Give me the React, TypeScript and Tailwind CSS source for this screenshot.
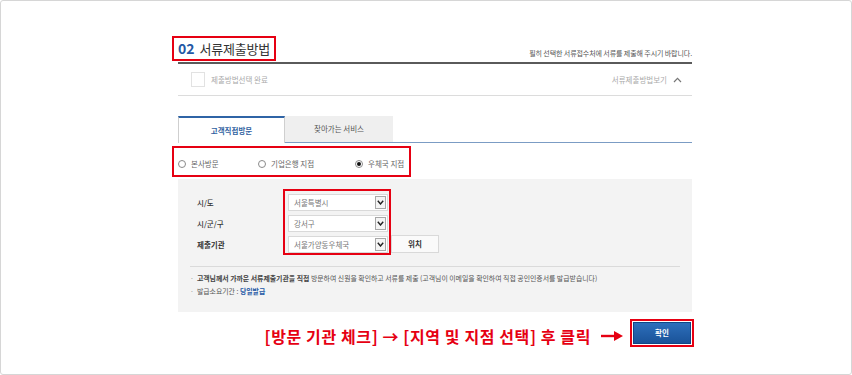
const RED = 'border-[#e60012]';

function Radio({ label, checked, className }: { label: string; checked?: boolean; className?: string }) {
	return (
		<label className={`flex items-center gap-[5px] ${className ?? ''}`}>
			<span className="flex h-[8px] w-[8px] items-center justify-center rounded-full border border-[#8a8a8a] bg-white">
				{checked && <span className="h-[4px] w-[4px] rounded-full bg-[#111]" />}
			</span>
			<span className="text-[7.5px] text-[#666]">{label}</span>
		</label>
	);
}

function Select({ value }: { value: string }) {
	return (
		<div className="flex h-[17px] w-[100px] items-stretch border border-[#d9d9d9] bg-white">
			<span className="flex flex-1 items-center pl-[5px] text-[7.5px] text-[#777]">{value}</span>
			<span className="m-[1px] flex w-[11px] items-center justify-center border border-[#a8a8a8] bg-[#f4f4f4]">
				<svg width="7" height="5" viewBox="0 0 7 5">
					<path d="M0.8 0.8 L3.5 4 L6.2 0.8" fill="none" stroke="#222" strokeWidth="1.4" />
				</svg>
			</span>
		</div>
	);
}

export default function App() {
	return (
		<div className="h-[375px] w-[852px] overflow-hidden rounded-[3px] border border-[#d6d6d6] bg-white font-['Noto_Sans_CJK_KR','Noto_Sans',sans-serif]">
			<div className="ml-[177px] w-[514px] pt-[36px]">
				{/* title */}
				<div className="flex items-end justify-between border-b-2 border-[#5a5a5a] pb-[2px]">
					<h2 className="relative flex h-[23px] items-center gap-[5px]">
						<span className="text-[14px] font-bold text-[#2358a5]">02</span>
						<span className="text-[13px] tracking-[-0.2px] text-[#333]">서류제출방법</span>
						<span className={`absolute -left-[6px] -top-[1px] h-[25px] w-[104px] border-2 ${RED}`} />
					</h2>
					<p className="pb-[2px] text-[7px] tracking-[-0.1px] text-[#555]">
						필히 선택한 서류접수처에 서류를 제출해 주시기 바랍니다.
					</p>
				</div>

				{/* completed row */}
				<div className="flex h-[32px] items-center justify-between border-b border-[#dcdcdc] pl-[13px] pr-[10px]">
					<div className="flex items-center gap-[6px]">
						<span className="h-[15px] w-[14px] border border-[#e2e2e2] bg-white" />
						<span className="text-[7.5px] text-[#aaa]">제출방법선택 완료</span>
					</div>
					<div className="flex items-center gap-[6px]">
						<span className="text-[7.5px] text-[#aaa]">서류제출방법보기</span>
						<svg width="9" height="6" viewBox="0 0 9 6">
							<path d="M1 5 L4.5 1.3 L8 5" fill="none" stroke="#777" strokeWidth="1.2" />
						</svg>
					</div>
				</div>

				{/* tabs */}
				<div className="mt-[20px] flex h-[27px]">
					<div className="flex w-[107px] items-center justify-center border-x border-t-2 border-x-[#cfcfcf] border-t-[#2f64a6] bg-white">
						<span className="text-[7.5px] font-bold text-[#2f5f9f]">고객직접방문</span>
					</div>
					<div className="flex w-[108px] items-center justify-center border-b border-[#7b9cc4] bg-[#efefef]">
						<span className="text-[7.5px] text-[#555]">찾아가는 서비스</span>
					</div>
					<div className="flex-1 border-b border-[#7b9cc4]" />
				</div>

				{/* radios */}
				<div className="relative flex h-[36px] items-start pt-[15px]">
					<Radio label="본사방문" className="w-[80px]" />
					<Radio label="기업은행 지점" className="w-[97px]" />
					<Radio label="우체국 지점" checked />
					<span className={`absolute -left-[6px] top-[3px] h-[31px] w-[239px] border-2 ${RED}`} />
				</div>

				{/* gray panel */}
				<div className="h-[133px] bg-[#f3f3f3] pt-[15px]">
					<div className="flex pl-[19px]">
						<div className="flex w-[91px] flex-col gap-[4px]">
							<span className="flex h-[17px] items-center text-[7.5px] font-medium text-[#333]">시/도</span>
							<span className="flex h-[17px] items-center text-[7.5px] font-medium text-[#333]">시/군/구</span>
							<span className="flex h-[17px] items-center text-[7.5px] font-bold text-[#333]">제출기관</span>
						</div>
						<div className="flex items-end gap-[3px]">
							<div className="relative flex flex-col gap-[4px]">
								<Select value="서울특별시" />
								<Select value="강서구" />
								<Select value="서울가양동우체국" />
								<span className={`absolute -left-[5px] -top-[5px] h-[66px] w-[108px] border-2 ${RED}`} />
							</div>
							<button className="flex h-[18px] w-[48px] items-center justify-center border border-[#d9d9d9] bg-[#fafafa] text-[7.5px] font-bold text-[#333]">
								위치
							</button>
						</div>
					</div>

					<div className="mx-[12px] mt-[13px] border-t border-[#dadada]" />

					<ul className="ml-[12px] pt-[5px] text-[6.9px] leading-[13px] text-[#555]">
						<li className="flex gap-[3px]">
							<span className="text-[#999]">·</span>
							<span>
								<b className="font-bold text-[#444]">고객님께서 가까운 서류제출기관을 직접</b> 방문하여 신원을 확인하고 서류를 제출 (고객님이 이메일을 확인하여 직접 공인인증서를 발급받습니다)
							</span>
						</li>
						<li className="flex gap-[3px]">
							<span className="text-[#999]">·</span>
							<span>
								발급소요기간 : <b className="font-bold text-[#2358a5]">당일발급</b>
							</span>
						</li>
					</ul>
				</div>

				{/* bottom */}
				<div className="mt-[6px] flex items-center justify-end pr-[1px]">
					<p className="mt-[6px] text-[16px] font-bold tracking-[0.6px] text-[#e60012]">
						[방문 기관 체크] → [지역 및 지점 선택] 후 클릭
					</p>
					<svg className="ml-[10px] mr-[10px] mt-[6px]" width="22" height="12" viewBox="0 0 22 12">
						<path d="M0 6 H15" stroke="#e60012" strokeWidth="2.4" />
						<path d="M13 1 L22 6 L13 11 Z" fill="#e60012" />
					</svg>
					<div className="relative">
						<button className="flex h-[22px] w-[58px] items-center justify-center border border-[#0f4686] bg-gradient-to-b from-[#2d6fbb] to-[#1a5399] text-[7.5px] font-bold text-white">
							확인
						</button>
						<span className={`absolute -left-[3px] -top-[3px] h-[28px] w-[64px] border-2 ${RED}`} />
					</div>
				</div>
			</div>
		</div>
	);
}
